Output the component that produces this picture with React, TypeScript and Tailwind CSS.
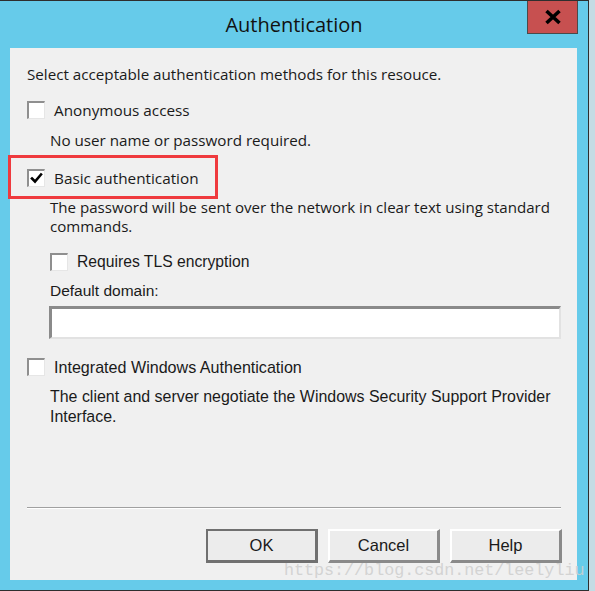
import React from "react";

const seg = "font-['Open_Sans','Noto_Sans',sans-serif]";
const ari = "font-['Liberation_Sans',Arial,sans-serif]";

function Box({ checked = false }: { checked?: boolean }) {
  return (
    <div className="relative w-[18px] h-[18px] shrink-0 bg-white border-t-2 border-l-2 border-t-[#8f8f8f] border-l-[#8f8f8f] border-r border-b border-r-[#e6e6e6] border-b-[#e6e6e6]">
      {checked && (
        <svg className="absolute left-[1px] top-[1px]" width="13" height="13" viewBox="0 0 13 13">
          <path d="M2 6.5 L5 9.5 L11 2.5" fill="none" stroke="#000" strokeWidth="2.6" strokeLinecap="square" />
        </svg>
      )}
    </div>
  );
}

function Btn({ label, def = false }: { label: string; def?: boolean }) {
  return (
    <div
      className={
        "w-[112px] h-[34px] flex items-center justify-center bg-[#ececec] text-[16.5px] text-[#1a1a1a] " +
        ari +
        (def
          ? " border-t-2 border-l-2 border-r-[3px] border-b-[3px] border-[#707070]"
          : " border-t-2 border-l-2 border-t-white border-l-white border-r-[3px] border-b-[3px] border-r-[#8a8a8a] border-b-[#8a8a8a]")
      }
    >
      {label}
    </div>
  );
}

export default function App() {
  return (
    <div className="relative w-[595px] h-[591px] bg-[#c4dce4] overflow-hidden">
      <div className="w-[589px] h-[591px] bg-[#66cbea] border-t border-r border-b border-[#2e2e2e] flex flex-col">
        {/* title bar */}
        <div className="relative h-[47px] shrink-0 flex items-start justify-center">
          <div className={"mt-[10px] text-[20px] leading-[28px] text-[#111] " + seg}>Authentication</div>
          <div className="absolute left-[527px] top-0 w-[51px] h-[33px] bg-[#c75050] border-l border-r border-b border-[#4a4a4a] flex items-center justify-center">
            <svg width="18" height="16" viewBox="0 0 18 16">
              <path d="M2.5 2 L15.5 14 M15.5 2 L2.5 14" stroke="#000" strokeWidth="3.6" />
            </svg>
          </div>
        </div>
        {/* content */}
        <div className="ml-[10px] mr-[11px] mb-[10px] flex-1 bg-[#f0f0f0] flex flex-col text-[#1a1a1a]">
          <div className={"ml-[17px] mt-[16px] text-[15.2px] leading-[20px] " + seg}>
            Select acceptable authentication methods for this resouce.
          </div>
          <div className="ml-[17px] mt-[16px] flex items-center h-[20px]">
            <Box />
            <span className={"ml-[9px] text-[15.3px] leading-[20px] " + seg}>Anonymous access</span>
          </div>
          <div className={"ml-[40px] mt-[10px] text-[15.2px] leading-[20px] " + seg}>No user name or password required.</div>
          <div className="relative ml-[17px] mt-[18px] flex items-center h-[20px]">
            <div className="absolute left-[-19px] top-[-13px] w-[210px] h-[44px] border-[3px] border-[#ef3a3e]" />
            <Box checked />
            <span className={"ml-[9px] text-[15.3px] leading-[20px] " + seg}>Basic authentication</span>
          </div>
          <div className={"ml-[40px] mt-[10px] mr-[14px] text-[15.1px] leading-[19px] " + seg}>
            The password will be sent over the network in clear text using standard commands.
          </div>
          <div className="ml-[40px] mt-[16px] flex items-center h-[20px]">
            <Box />
            <span className={"ml-[9px] text-[15.7px] leading-[20px] " + ari}>Requires TLS encryption</span>
          </div>
          <div className={"ml-[40px] mt-[9px] text-[15.5px] leading-[20px] " + ari}>Default domain:</div>
          <div className="ml-[39px] mt-[5px] w-[512px] h-[33px] bg-white border-t-[3px] border-l-[3px] border-t-[#8a8a8a] border-l-[#8a8a8a] border-r-2 border-b-2 border-r-[#e2e2e2] border-b-[#e2e2e2]" />
          <div className="ml-[17px] mt-[18px] flex items-center h-[20px]">
            <Box />
            <span className={"ml-[9px] text-[16.1px] leading-[20px] " + ari}>Integrated Windows Authentication</span>
          </div>
          <div className={"ml-[40px] mt-[10px] mr-[14px] text-[15.95px] leading-[20px] " + ari}>
            The client and server negotiate the Windows Security Support Provider Interface.
          </div>
          <div className="flex-1" />
          <div className="ml-[17px] mr-[16px] h-[2px] border-t border-t-[#a0a0a0] border-b border-b-white" />
          <div className="mt-[20px] mb-[17px] mr-[15px] flex justify-end gap-[10px]">
            <Btn label="OK" def />
            <Btn label="Cancel" />
            <Btn label="Help" />
          </div>
        </div>
      </div>
      <div className="absolute left-[284px] top-[561px] text-[16.7px] leading-[20px] text-[#cfcfcf]/90 font-['Liberation_Mono',monospace] whitespace-nowrap">
        https://blog.csdn.net/leelyliu
      </div>
    </div>
  );
}
